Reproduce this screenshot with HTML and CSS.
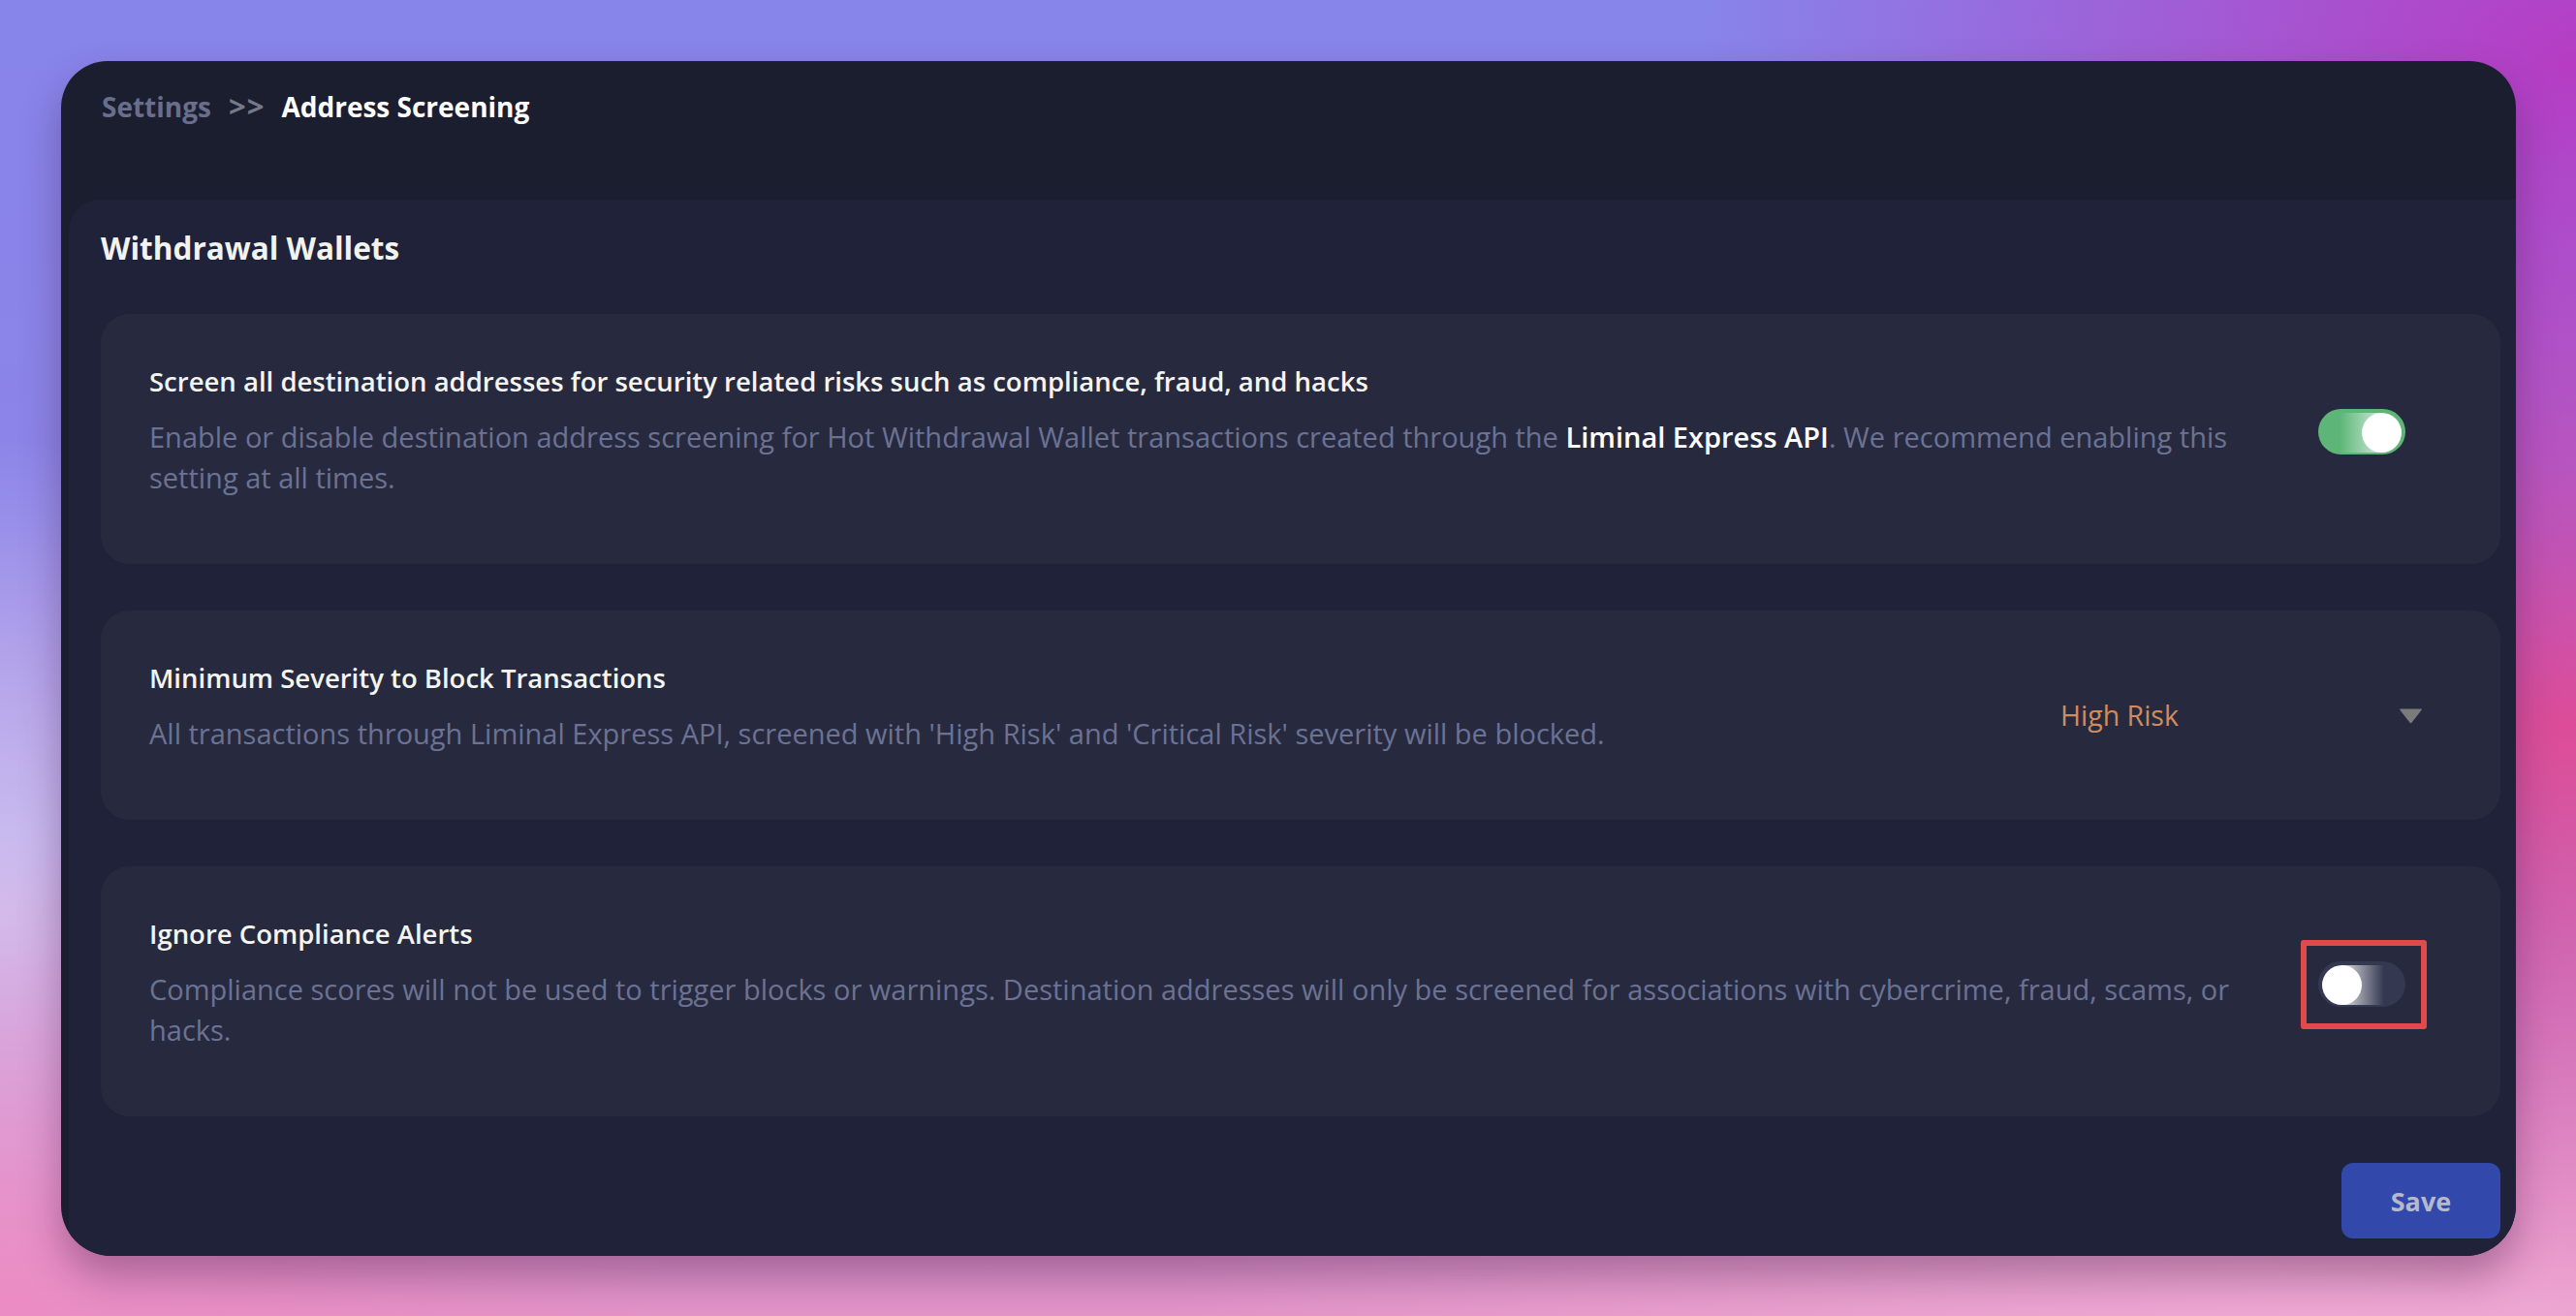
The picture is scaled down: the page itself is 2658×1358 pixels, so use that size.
FILE: index.html
```html
<!DOCTYPE html>
<html lang="en">
<head>
<meta charset="utf-8">
<title>Address Screening</title>
<link rel="stylesheet" href="styles.css">
</head>
<body>
<div class="window">
  <header class="header">
    <nav class="crumbs">
      <span class="crumb-muted">Settings</span>
      <span class="crumb-sep">&gt;&gt;</span>
      <span class="crumb-current">Address Screening</span>
    </nav>
  </header>
  <main class="panel">
    <h2 class="section-title">Withdrawal Wallets</h2>
    <section class="card">
      <div class="card-text">
        <div class="card-title">Screen all destination addresses for security related risks such as compliance, fraud, and hacks</div>
        <p class="card-desc">Enable or disable destination address screening for Hot Withdrawal Wallet transactions created through the <span class="hl">Liminal Express API</span>. We recommend enabling this setting at all times.</p>
      </div>
      <div class="toggle-wrap">
        <div class="toggle on"><span class="glow"></span><span class="knob"></span></div>
      </div>
    </section>
    <section class="card">
      <div class="card-text">
        <div class="card-title">Minimum Severity to Block Transactions</div>
        <p class="card-desc">All transactions through Liminal Express API, screened with 'High Risk' and 'Critical Risk' severity will be blocked.</p>
      </div>
      <div class="select">
        <span class="select-value">High Risk</span>
        <svg class="caret" width="25" height="17" viewBox="0 0 25 17"><path d="M2 1.5 H23 Q24.5 1.5 23.6 2.8 L13.6 15.6 Q12.5 16.8 11.4 15.6 L1.4 2.8 Q0.5 1.5 2 1.5 Z" fill="#7b7b7c"/></svg>
      </div>
    </section>
    <section class="card">
      <div class="card-text">
        <div class="card-title">Ignore Compliance Alerts</div>
        <p class="card-desc">Compliance scores will not be used to trigger blocks or warnings. Destination addresses will only be screened for associations with cybercrime, fraud, scams, or hacks.</p>
      </div>
      <div class="toggle-wrap">
        <div class="toggle off highlighted"><span class="glow"></span><span class="knob"></span></div>
      </div>
    </section>
    <div class="actions">
      <button class="save-btn" type="button">Save</button>
    </div>
  </main>
</div>
</body>
</html>
```
FILE: styles.css
```css
html, body {
  margin: 0;
  padding: 0;
}
body {
  width: 2658px;
  height: 1358px;
  overflow: hidden;
  font-family: "Open Sans", "Lato", "Liberation Sans", sans-serif;
  background:
    radial-gradient(ellipse 900px 700px at 100% 5%, rgba(182, 60, 196, 1) 0%, rgba(182, 60, 196, 0) 100%),
    radial-gradient(ellipse 900px 600px at 100% 55%, rgba(222, 76, 150, 1) 0%, rgba(222, 76, 150, 0) 100%),
    radial-gradient(ellipse 1200px 500px at 90% 105%, rgba(240, 170, 212, 1) 0%, rgba(240, 170, 212, 0) 100%),
    radial-gradient(ellipse 700px 500px at 0% 100%, rgba(236, 140, 196, 1) 0%, rgba(236, 140, 196, 0) 100%),
    radial-gradient(ellipse 400px 500px at 0% 70%, rgba(206, 196, 242, 1) 0%, rgba(206, 196, 242, 0) 100%),
    linear-gradient(180deg, #8784ea 0%, #8d84e8 40%, #c48ed8 80%, #e394c8 100%);
}

.window {
  box-sizing: border-box;
  margin: 63px 0 0 63px;
  width: 2533px;
  height: 1233px;
  border-radius: 48px 48px 52px 52px;
  overflow: hidden;
  background: #1b1e2f;
  display: flex;
  flex-direction: column;
  box-shadow: 0 22px 40px rgba(60, 20, 60, 0.35);
}

.header {
  height: 143px;
  box-sizing: border-box;
  padding: 31px 0 0 42px;
  flex: none;
}
.crumbs {
  font-size: 28px;
  font-weight: 700;
  line-height: 30px;
  display: flex;
  align-items: baseline;
  gap: 18px;
}
.crumb-muted { color: #686e8c; }
.crumb-sep { color: #767988; font-size: 31px; letter-spacing: 1px; margin-right: -1px; }
.crumb-current { color: #ffffff; }

.panel {
  flex: 1;
  margin-left: 8px;
  background: #20223a;
  border-top-left-radius: 32px;
  padding: 31px 16px 0 33px;
  display: flex;
  flex-direction: column;
}

.section-title {
  margin: 0 0 49px 0;
  font-size: 31.5px;
  line-height: 38px;
  font-weight: 700;
  color: #f2f2ee;
}

.card {
  background: #272a3f;
  border-radius: 30px;
  padding: 52px 80px 68px 50px;
  display: flex;
  align-items: center;
  gap: 72px;
  margin-bottom: 48px;
}
.card-text {
  flex: 1;
  min-width: 0;
}
.card-title {
  font-size: 27.5px;
  line-height: 36px;
  font-weight: 600;
  color: #f4f4f0;
}
.card-desc {
  margin: 18px 0 0 0;
  font-size: 29px;
  line-height: 42px;
  color: #6b7293;
}
.hl {
  color: #ffffff;
  font-weight: 600;
}

.toggle-wrap {
  flex: none;
  margin-right: 18px;
}
.toggle {
  position: relative;
  width: 90px;
  height: 47px;
  border-radius: 24px;
  box-sizing: border-box;
}
.toggle.on { background: #5db677; }
.toggle.off { background: #343850; }
.knob {
  position: absolute;
  top: 4px;
  width: 41px;
  height: 41px;
  border-radius: 50%;
  background: #ffffff;
}
.toggle.on .knob { right: 4px; }
.toggle.off .knob { left: 4px; }
.glow {
  position: absolute;
  top: 4px;
  height: 41px;
  width: 44px;
}
.toggle.on .glow {
  right: 24px;
  background: linear-gradient(to left, rgba(255, 255, 255, 0.7), rgba(255, 255, 255, 0));
}
.toggle.off .glow {
  left: 24px;
  background: linear-gradient(to right, rgba(255, 255, 255, 0.85), rgba(255, 255, 255, 0));
}
.toggle.highlighted::after {
  content: "";
  position: absolute;
  top: -22px;
  bottom: -23px;
  left: -18px;
  right: -22px;
  border: 6px solid #e14a4a;
  border-radius: 3px;
}

.select {
  flex: none;
  width: 374px;
  margin-top: 16px;
  display: flex;
  align-items: center;
  justify-content: space-between;
}
.select-value {
  font-size: 28.5px;
  line-height: 34px;
  color: #d28b5e;
}
.caret { display: block; }

.actions {
  display: flex;
  justify-content: flex-end;
}
.save-btn {
  width: 164px;
  height: 78px;
  border: none;
  border-radius: 12px;
  background: #3249ab;
  color: #b6b9cb;
  font-family: "Open Sans", "Lato", "Liberation Sans", sans-serif;
  font-size: 27px;
  font-weight: 700;
  padding: 0;
}
```
